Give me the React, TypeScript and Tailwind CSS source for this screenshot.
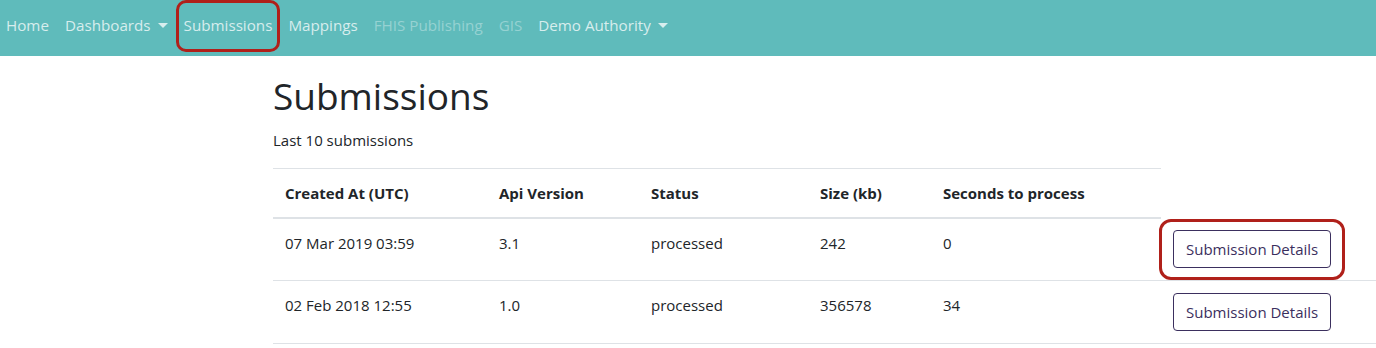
const rows = [
  { created: '07 Mar 2019 03:59', api: '3.1', status: 'processed', size: '242', secs: '0', marked: true },
  { created: '02 Feb 2018 12:55', api: '1.0', status: 'processed', size: '356578', secs: '34', marked: false },
];

function Caret() {
  return <span className="ml-[7px] inline-block h-0 w-0 border-x-[5px] border-t-[5px] border-x-transparent border-t-current align-[3px]" />;
}

export default function App() {
  const font = { fontFamily: '"Open Sans", "Noto Sans", sans-serif' };

  return (
    <div className="min-h-[348px] overflow-hidden bg-white text-[#212529]" style={font}>
      <nav className="flex h-14 items-center bg-[#5fbbbb] pb-[6px] pl-[6px] text-[15.2px]">
        <a className="pr-4 text-white/75">Home</a>
        <a className="pr-4 text-white/75">Dashboards<Caret /></a>
        <a className="mr-4 relative text-white/75">
          Submissions
          <span className="absolute -left-[8px] -right-[8px] -top-[14px] -bottom-[16px] rounded-[10px] border-[3px] border-[#b0201a]" />
        </a>
        <a className="pr-4 text-white/75">Mappings</a>
        <a className="pr-4 text-white/35">FHIS Publishing</a>
        <a className="pr-4 text-white/35">GIS</a>
        <a className="text-white/75">Demo Authority<Caret /></a>
      </nav>

      <div className="pl-[273px]">
        <h1 className="mt-4 mb-2 text-[37px] leading-[48px]">Submissions</h1>
        <p className="mb-4 text-[15px] leading-6">Last 10 submissions</p>
        <table className="w-[1103px] table-fixed border-collapse text-[15px] leading-6">
          <colgroup>
            <col className="w-[214px]" />
            <col className="w-[152px]" />
            <col className="w-[169px]" />
            <col className="w-[123px]" />
            <col className="w-[230px]" />
            <col />
          </colgroup>
          <thead>
            <tr>
              {['Created At (UTC)', 'Api Version', 'Status', 'Size (kb)', 'Seconds to process'].map((h) => (
                <th key={h} className="border-t border-b-2 border-[#dee2e6] px-3 py-3 text-left font-bold">
                  {h}
                </th>
              ))}
              <th />
            </tr>
          </thead>
          <tbody>
            {rows.map((r) => (
              <tr key={r.created} className="border-b border-[#dee2e6]">
                <td className="px-3 py-3 align-top">{r.created}</td>
                <td className="px-3 py-3 align-top">{r.api}</td>
                <td className="px-3 py-3 align-top">{r.status}</td>
                <td className="px-3 py-3 align-top">{r.size}</td>
                <td className="px-3 py-3 align-top">{r.secs}</td>
                <td className="px-3 py-3 align-top">
                  <span className="relative inline-block">
                    <button className="h-[38px] rounded border border-[#3b2f5e] px-3 text-[#3b2f5e]">Submission Details</button>
                    {r.marked ? (
                      <span className="absolute -left-[14px] -right-[14px] -top-[11px] -bottom-[12px] rounded-[12px] border-[3px] border-[#b0201a]" />
                    ) : null}
                  </span>
                </td>
              </tr>
            ))}
          </tbody>
        </table>
      </div>
    </div>
  );
}
